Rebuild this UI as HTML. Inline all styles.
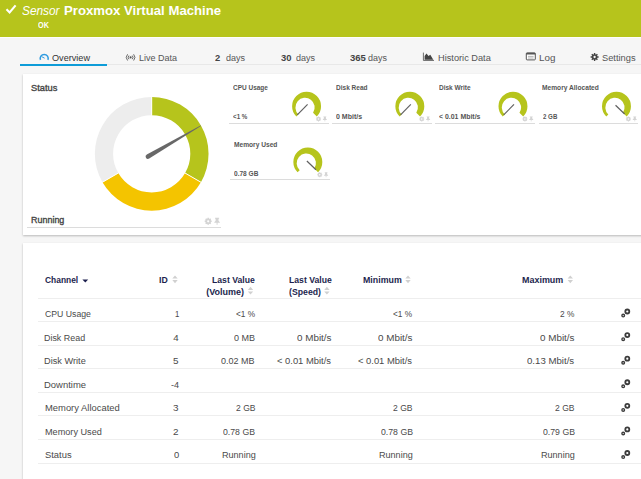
<!DOCTYPE html>
<html><head><meta charset="utf-8"><title>Sensor Proxmox Virtual Machine</title>
<style>
html,body{margin:0;padding:0}
body{width:641px;height:479px;overflow:hidden;background:#f6f6f6;font-family:"Liberation Sans",sans-serif;position:relative;color:#444}
.abs,.t,.ul,.hl,.card{position:absolute;white-space:nowrap}
.t{transform-origin:0 0}
.hdr{position:absolute;left:0;top:0;width:641px;height:37.4px;background:#b6c41c;border-bottom:1.8px solid #fdfdfd}
.card{background:#fff;box-shadow:0 0.6px 2px rgba(0,0,0,.25)}
.ul,.hl{height:1px;background:#dcdcdc}
.hl{background:#eeeeee}
svg.ov{position:absolute;left:0;top:0;pointer-events:none}
</style></head><body>
<div class="hdr"></div>
<div class="t" style="left:21.64px;top:3.00px;font-size:13px;line-height:15px;transform:scaleX(0.9122);font-style:italic;color:#fff">Sensor</div>
<div class="t" style="left:64.24px;top:3.00px;font-size:13px;line-height:15px;transform:scaleX(1.0130);font-weight:bold;color:#fff">Proxmox Virtual Machine</div>
<div class="t" style="left:38.18px;top:21.00px;font-size:8.2px;line-height:9px;transform:scaleX(0.8833);color:#fff;font-weight:bold">OK</div>
<div class="abs" style="left:20px;top:64px;width:621px;height:1px;background:#e8e8e8"></div>
<div class="abs" style="left:20px;top:63.8px;width:87px;height:1.8px;background:#0e9cd8"></div>
<div class="t" style="left:52.03px;top:52.00px;font-size:9.6px;line-height:11px;transform:scaleX(0.9494);color:#333">Overview</div>
<div class="t" style="left:138.55px;top:52.00px;font-size:9.6px;line-height:11px;transform:scaleX(0.9371);color:#555">Live Data</div>
<div class="t" style="left:215.04px;top:53.00px;font-size:9.0px;line-height:10px;transform:scaleX(1.0444);font-weight:bold;color:#444">2</div>
<div class="t" style="left:226.43px;top:52.00px;font-size:9.6px;line-height:11px;transform:scaleX(0.9385);color:#555">days</div>
<div class="t" style="left:281.49px;top:53.00px;font-size:9.0px;line-height:10px;transform:scaleX(1.0474);font-weight:bold;color:#444">30</div>
<div class="t" style="left:295.73px;top:52.00px;font-size:9.6px;line-height:11px;transform:scaleX(0.9385);color:#555">days</div>
<div class="t" style="left:349.54px;top:53.00px;font-size:9.0px;line-height:10px;transform:scaleX(1.0552);font-weight:bold;color:#444">365</div>
<div class="t" style="left:368.13px;top:52.00px;font-size:9.6px;line-height:11px;transform:scaleX(0.9333);color:#555">days</div>
<div class="t" style="left:437.53px;top:52.00px;font-size:9.6px;line-height:11px;transform:scaleX(0.9613);color:#555">Historic Data</div>
<div class="t" style="left:539.03px;top:52.00px;font-size:9.6px;line-height:11px;transform:scaleX(1.0237);color:#555">Log</div>
<div class="t" style="left:602.12px;top:52.00px;font-size:9.6px;line-height:11px;transform:scaleX(0.9676);color:#555">Settings</div>
<div class="card" style="left:22.8px;top:74px;width:640px;height:160.5px"></div>
<div class="card" style="left:22.8px;top:243.3px;width:640px;height:260px"></div>
<div class="t" style="left:31.00px;top:83.00px;font-size:9.3px;line-height:10px;transform:scaleX(1.0000);-webkit-text-stroke:0.35px #444;color:#444">Status</div>
<div class="t" style="left:31.02px;top:215.00px;font-size:9.3px;line-height:10px;transform:scaleX(0.9630);-webkit-text-stroke:0.35px #444;color:#444">Running</div>
<div class="ul" style="left:27px;top:227px;width:194px"></div>
<div class="t" style="left:232.77px;top:84.00px;font-size:6.9px;line-height:7px;transform:scaleX(0.9388);font-weight:bold;color:#555">CPU Usage</div>
<div class="t" style="left:232.77px;top:113.00px;font-size:6.9px;line-height:7px;transform:scaleX(0.9032);font-weight:bold;color:#555">&lt;1 %</div>
<div class="ul" style="left:229px;top:123.0px;width:99.5px"></div>
<div class="t" style="left:335.78px;top:84.00px;font-size:6.9px;line-height:7px;transform:scaleX(0.9462);font-weight:bold;color:#555">Disk Read</div>
<div class="t" style="left:336.00px;top:113.00px;font-size:6.9px;line-height:7px;transform:scaleX(1.0198);font-weight:bold;color:#555">0 Mbit/s</div>
<div class="ul" style="left:332.25px;top:123.0px;width:99.5px"></div>
<div class="t" style="left:438.93px;top:84.00px;font-size:6.9px;line-height:7px;transform:scaleX(0.9424);font-weight:bold;color:#555">Disk Write</div>
<div class="t" style="left:439.15px;top:113.00px;font-size:6.9px;line-height:7px;transform:scaleX(1.0061);font-weight:bold;color:#555">&lt; 0.01 Mbit/s</div>
<div class="ul" style="left:435.4px;top:123.0px;width:99.5px"></div>
<div class="t" style="left:542.42px;top:84.00px;font-size:6.9px;line-height:7px;transform:scaleX(0.9614);font-weight:bold;color:#555">Memory Allocated</div>
<div class="t" style="left:542.68px;top:113.00px;font-size:6.9px;line-height:7px;transform:scaleX(0.8903);font-weight:bold;color:#555">2 GB</div>
<div class="ul" style="left:538.9px;top:123.0px;width:99.5px"></div>
<div class="t" style="left:233.77px;top:141.00px;font-size:6.9px;line-height:7px;transform:scaleX(0.9605);font-weight:bold;color:#555">Memory Used</div>
<div class="t" style="left:234.01px;top:170.00px;font-size:6.9px;line-height:7px;transform:scaleX(0.9505);font-weight:bold;color:#555">0.78 GB</div>
<div class="ul" style="left:230.25px;top:178.8px;width:99.5px"></div>
<div class="t" style="left:45.27px;top:275.00px;font-size:9.0px;line-height:10px;transform:scaleX(0.9353);font-weight:bold;color:#1c1f4e">Channel</div>
<div class="t" style="left:159.12px;top:275.00px;font-size:9.0px;line-height:10px;transform:scaleX(0.9697);font-weight:bold;color:#1c1f4e">ID</div>
<div class="t" style="left:211.92px;top:275.00px;font-size:9.0px;line-height:10px;transform:scaleX(0.9600);font-weight:bold;color:#1c1f4e">Last Value</div>
<div class="t" style="left:206.25px;top:287.00px;font-size:9.0px;line-height:10px;transform:scaleX(1.0000);font-weight:bold;color:#1c1f4e">(Volume)</div>
<div class="t" style="left:288.52px;top:275.00px;font-size:9.0px;line-height:10px;transform:scaleX(0.9600);font-weight:bold;color:#1c1f4e">Last Value</div>
<div class="t" style="left:288.52px;top:287.00px;font-size:9.0px;line-height:10px;transform:scaleX(0.9688);font-weight:bold;color:#1c1f4e">(Speed)</div>
<div class="t" style="left:362.51px;top:275.00px;font-size:9.0px;line-height:10px;transform:scaleX(0.9805);font-weight:bold;color:#1c1f4e">Minimum</div>
<div class="t" style="left:522.25px;top:275.00px;font-size:9.0px;line-height:10px;transform:scaleX(0.9938);font-weight:bold;color:#1c1f4e">Maximum</div>
<div class="hl" style="left:38px;top:298px;width:603px"></div>
<div class="t" style="left:44.65px;top:308.00px;font-size:9.7px;line-height:11px;transform:scaleX(0.8975);color:#4a4a4a">CPU Usage</div>
<div class="t" style="left:174.60px;top:308.00px;font-size:9.7px;line-height:11px;transform:scaleX(0.8000);color:#4a4a4a">1</div>
<div class="t" style="left:235.87px;top:308.00px;font-size:9.7px;line-height:11px;transform:scaleX(0.8558);color:#4a4a4a">&lt;1 %</div>
<div class="t" style="left:393.37px;top:308.00px;font-size:9.7px;line-height:11px;transform:scaleX(0.8558);color:#4a4a4a">&lt;1 %</div>
<div class="t" style="left:559.82px;top:308.00px;font-size:9.7px;line-height:11px;transform:scaleX(0.8594);color:#4a4a4a">2 %</div>
<div class="hl" style="left:38px;top:321.0px;width:603px"></div>
<div class="t" style="left:44.41px;top:332.00px;font-size:9.7px;line-height:11px;transform:scaleX(0.9195);color:#4a4a4a">Disk Read</div>
<div class="t" style="left:173.35px;top:332.00px;font-size:9.7px;line-height:11px;transform:scaleX(1.0000);color:#4a4a4a">4</div>
<div class="t" style="left:233.97px;top:332.00px;font-size:9.7px;line-height:11px;transform:scaleX(0.9318);color:#4a4a4a">0 MB</div>
<div class="t" style="left:296.95px;top:332.00px;font-size:9.7px;line-height:11px;transform:scaleX(1.0165);color:#4a4a4a">0 Mbit/s</div>
<div class="t" style="left:378.15px;top:332.00px;font-size:9.7px;line-height:11px;transform:scaleX(1.0165);color:#4a4a4a">0 Mbit/s</div>
<div class="t" style="left:539.95px;top:332.00px;font-size:9.7px;line-height:11px;transform:scaleX(1.0165);color:#4a4a4a">0 Mbit/s</div>
<div class="hl" style="left:38px;top:344.6px;width:603px"></div>
<div class="t" style="left:44.39px;top:355.00px;font-size:9.7px;line-height:11px;transform:scaleX(0.9497);color:#4a4a4a">Disk Write</div>
<div class="t" style="left:173.49px;top:355.00px;font-size:9.7px;line-height:11px;transform:scaleX(1.0222);color:#4a4a4a">5</div>
<div class="t" style="left:221.47px;top:355.00px;font-size:9.7px;line-height:11px;transform:scaleX(0.9296);color:#4a4a4a">0.02 MB</div>
<div class="t" style="left:277.27px;top:355.00px;font-size:9.7px;line-height:11px;transform:scaleX(0.9682);color:#4a4a4a">&lt; 0.01 Mbit/s</div>
<div class="t" style="left:358.47px;top:355.00px;font-size:9.7px;line-height:11px;transform:scaleX(0.9682);color:#4a4a4a">&lt; 0.01 Mbit/s</div>
<div class="t" style="left:527.25px;top:355.00px;font-size:9.7px;line-height:11px;transform:scaleX(0.9947);color:#4a4a4a">0.13 Mbit/s</div>
<div class="hl" style="left:38px;top:368.2px;width:603px"></div>
<div class="t" style="left:44.37px;top:379.00px;font-size:9.7px;line-height:11px;transform:scaleX(0.9762);color:#4a4a4a">Downtime</div>
<div class="t" style="left:170.63px;top:379.00px;font-size:9.7px;line-height:11px;transform:scaleX(0.9375);color:#4a4a4a">-4</div>
<div class="hl" style="left:38px;top:391.8px;width:603px"></div>
<div class="t" style="left:44.77px;top:402.00px;font-size:9.7px;line-height:11px;transform:scaleX(0.9703);color:#4a4a4a">Memory Allocated</div>
<div class="t" style="left:173.49px;top:402.00px;font-size:9.7px;line-height:11px;transform:scaleX(1.0222);color:#4a4a4a">3</div>
<div class="t" style="left:235.51px;top:402.00px;font-size:9.7px;line-height:11px;transform:scaleX(0.8824);color:#4a4a4a">2 GB</div>
<div class="t" style="left:393.01px;top:402.00px;font-size:9.7px;line-height:11px;transform:scaleX(0.8824);color:#4a4a4a">2 GB</div>
<div class="t" style="left:554.81px;top:402.00px;font-size:9.7px;line-height:11px;transform:scaleX(0.8824);color:#4a4a4a">2 GB</div>
<div class="hl" style="left:38px;top:415.4px;width:603px"></div>
<div class="t" style="left:44.79px;top:426.00px;font-size:9.7px;line-height:11px;transform:scaleX(0.9424);color:#4a4a4a">Memory Used</div>
<div class="t" style="left:173.49px;top:426.00px;font-size:9.7px;line-height:11px;transform:scaleX(1.0222);color:#4a4a4a">2</div>
<div class="t" style="left:223.23px;top:426.00px;font-size:9.7px;line-height:11px;transform:scaleX(0.8993);color:#4a4a4a">0.78 GB</div>
<div class="t" style="left:380.73px;top:426.00px;font-size:9.7px;line-height:11px;transform:scaleX(0.8993);color:#4a4a4a">0.78 GB</div>
<div class="t" style="left:542.53px;top:426.00px;font-size:9.7px;line-height:11px;transform:scaleX(0.8993);color:#4a4a4a">0.79 GB</div>
<div class="hl" style="left:38px;top:439.0px;width:603px"></div>
<div class="t" style="left:44.62px;top:449.00px;font-size:9.7px;line-height:11px;transform:scaleX(0.9682);color:#4a4a4a">Status</div>
<div class="t" style="left:173.76px;top:449.00px;font-size:9.7px;line-height:11px;transform:scaleX(0.9684);color:#4a4a4a">0</div>
<div class="t" style="left:221.50px;top:449.00px;font-size:9.7px;line-height:11px;transform:scaleX(0.9353);color:#4a4a4a">Running</div>
<div class="t" style="left:379.00px;top:449.00px;font-size:9.7px;line-height:11px;transform:scaleX(0.9353);color:#4a4a4a">Running</div>
<div class="t" style="left:540.80px;top:449.00px;font-size:9.7px;line-height:11px;transform:scaleX(0.9353);color:#4a4a4a">Running</div>
<div class="hl" style="left:38px;top:462.6px;width:603px"></div>
<svg class="ov" width="641" height="479" viewBox="0 0 641 479">
<path d="M6.5 9.3L9.6 12.5L15.6 5.3" fill="none" stroke="#fff" stroke-width="2.1"/>
<g transform="translate(39 53)"><path d="M1.5 6.9A4 4 0 1 1 8.9 6.9" fill="none" stroke="#2f9be0" stroke-width="1.5"/><path d="M5.6 5.2L2.6 3.6" stroke="#2f9be0" stroke-width="1"/></g>
<g transform="translate(126 53.4) scale(0.92 1)"><circle cx="5" cy="4" r="1.15" fill="#555"/><path d="M3.2 2.2A2.6 2.6 0 0 0 3.2 5.8M6.8 2.2A2.6 2.6 0 0 1 6.8 5.8" fill="none" stroke="#5a5a5a" stroke-width="0.95"/><path d="M1.7 0.9A4.5 4.5 0 0 0 1.7 7.1M8.3 0.9A4.5 4.5 0 0 1 8.3 7.1" fill="none" stroke="#5a5a5a" stroke-width="0.95"/></g>
<g transform="translate(423 52.6) scale(1 0.911)"><path d="M0.4 0v8.6h10.6" fill="none" stroke="#555" stroke-width="0.9"/><path d="M1.6 7.9V3.6L3.5 1L5.5 3.8L7.3 2.3L10.3 7.9Z" fill="#444"/></g>
<g transform="translate(525.8 52.4)"><rect x="0.5" y="0.5" width="9" height="7" rx="0.8" fill="#fff" stroke="#555" stroke-width="1"/><rect x="0.5" y="0.5" width="9" height="1.6" fill="#555"/><path d="M2.2 4h5.6M2.2 5.6h5.6" stroke="#999" stroke-width="0.7"/></g>
<g transform="translate(594.6 57) scale(0.933)"><g stroke="#444" stroke-width="1.5"><path d="M0 -4.3V4.3M-4.3 0H4.3M-3 -3L3 3M-3 3L3 -3"/></g><circle r="3" fill="#444"/><circle r="1.25" fill="#f6f6f6"/></g>
<circle cx="208.20" cy="221.30" r="1.96" fill="none" stroke="#d4d4d4" stroke-width="1.75"/><path d="M210.12 221.30L211.70 221.30M209.56 222.66L210.67 223.77M208.20 223.23L208.20 224.80M206.84 222.66L205.73 223.77M206.27 221.30L204.70 221.30M206.84 219.94L205.73 218.83M208.20 219.38L208.20 217.80M209.56 219.94L210.67 218.83" stroke="#d4d4d4" stroke-width="1.47" fill="none"/><path d="M215.07 217.80h4.03v0.84h-0.56v2.10l1.34 1.40v0.56h-5.60v-0.56l1.34 -1.40v-2.10h-0.56Z" fill="#d4d4d4"/><path d="M217.09 222.00V224.80" stroke="#d4d4d4" stroke-width="0.91"/>
<path d="M151.70 96.95A56.85 56.85 0 0 1 200.93 182.22L185.13 173.10A38.6 38.6 0 0 0 151.70 115.20Z" fill="#b6c41c"/>
<path d="M200.93 182.22A56.85 56.85 0 0 1 102.47 182.23L118.27 173.10A38.6 38.6 0 0 0 185.13 173.10Z" fill="#f4c400"/>
<path d="M102.47 182.23A56.85 56.85 0 0 1 151.70 96.95L151.70 115.20A38.6 38.6 0 0 0 118.27 173.10Z" fill="#ededed"/>
<g stroke="#fff" stroke-width="1"><line x1="151.70" y1="115.70" x2="151.70" y2="96.45"/><line x1="184.70" y1="172.85" x2="201.37" y2="182.47"/><line x1="118.70" y1="172.85" x2="102.03" y2="182.48"/></g>
<g transform="translate(148.0 156.5) rotate(59.74)"><path d="M-2.4 0A2.4 2.4 0 0 0 2.4 0L0.35 -61.1L-0.35 -61.1Z" fill="#686868"/></g>
<path d="M296.34 116.49A14.48 14.48 0 1 1 316.82 116.49L313.06 112.73A9.64 9.64 0 1 0 298.44 114.39Z" fill="#b6c41c"/><line x1="307.58" y1="104.45" x2="297.28" y2="114.89" stroke="#606060" stroke-width="1.2"/>
<circle cx="318.50" cy="118.90" r="1.40" fill="none" stroke="#d4d4d4" stroke-width="1.25"/><path d="M319.88 118.90L321.00 118.90M319.47 119.87L320.27 120.67M318.50 120.28L318.50 121.40M317.53 119.87L316.73 120.67M317.12 118.90L316.00 118.90M317.53 117.93L316.73 117.13M318.50 117.53L318.50 116.40M319.47 117.93L320.27 117.13" stroke="#d4d4d4" stroke-width="1.05" fill="none"/><path d="M323.41 116.40h2.88v0.60h-0.40v1.50l0.96 1.00v0.40h-4.00v-0.40l0.96 -1.00v-1.50h-0.40Z" fill="#d4d4d4"/><path d="M324.85 119.40V121.40" stroke="#d4d4d4" stroke-width="0.65"/>
<path d="M399.59 116.49A14.48 14.48 0 1 1 420.07 116.49L416.31 112.73A9.64 9.64 0 1 0 401.69 114.39Z" fill="#b6c41c"/><line x1="410.83" y1="104.45" x2="400.53" y2="114.89" stroke="#606060" stroke-width="1.2"/>
<circle cx="421.75" cy="118.90" r="1.40" fill="none" stroke="#d4d4d4" stroke-width="1.25"/><path d="M423.12 118.90L424.25 118.90M422.72 119.87L423.52 120.67M421.75 120.28L421.75 121.40M420.78 119.87L419.98 120.67M420.38 118.90L419.25 118.90M420.78 117.93L419.98 117.13M421.75 117.53L421.75 116.40M422.72 117.93L423.52 117.13" stroke="#d4d4d4" stroke-width="1.05" fill="none"/><path d="M426.66 116.40h2.88v0.60h-0.40v1.50l0.96 1.00v0.40h-4.00v-0.40l0.96 -1.00v-1.50h-0.40Z" fill="#d4d4d4"/><path d="M428.10 119.40V121.40" stroke="#d4d4d4" stroke-width="0.65"/>
<path d="M502.74 116.49A14.48 14.48 0 1 1 523.22 116.49L519.46 112.73A9.64 9.64 0 1 0 504.84 114.39Z" fill="#b6c41c"/><line x1="513.98" y1="104.45" x2="503.68" y2="114.89" stroke="#606060" stroke-width="1.2"/>
<circle cx="524.90" cy="118.90" r="1.40" fill="none" stroke="#d4d4d4" stroke-width="1.25"/><path d="M526.27 118.90L527.40 118.90M525.87 119.87L526.67 120.67M524.90 120.28L524.90 121.40M523.93 119.87L523.13 120.67M523.52 118.90L522.40 118.90M523.93 117.93L523.13 117.13M524.90 117.53L524.90 116.40M525.87 117.93L526.67 117.13" stroke="#d4d4d4" stroke-width="1.05" fill="none"/><path d="M529.81 116.40h2.88v0.60h-0.40v1.50l0.96 1.00v0.40h-4.00v-0.40l0.96 -1.00v-1.50h-0.40Z" fill="#d4d4d4"/><path d="M531.25 119.40V121.40" stroke="#d4d4d4" stroke-width="0.65"/>
<path d="M606.24 116.49A14.48 14.48 0 1 1 626.72 116.49L622.96 112.73A9.64 9.64 0 1 0 608.34 114.39Z" fill="#b6c41c"/><line x1="615.54" y1="105.25" x2="624.63" y2="113.95" stroke="#606060" stroke-width="1.2"/>
<circle cx="628.40" cy="118.90" r="1.40" fill="none" stroke="#d4d4d4" stroke-width="1.25"/><path d="M629.77 118.90L630.90 118.90M629.37 119.87L630.17 120.67M628.40 120.28L628.40 121.40M627.43 119.87L626.63 120.67M627.02 118.90L625.90 118.90M627.43 117.93L626.63 117.13M628.40 117.53L628.40 116.40M629.37 117.93L630.17 117.13" stroke="#d4d4d4" stroke-width="1.05" fill="none"/><path d="M633.31 116.40h2.88v0.60h-0.40v1.50l0.96 1.00v0.40h-4.00v-0.40l0.96 -1.00v-1.50h-0.40Z" fill="#d4d4d4"/><path d="M634.75 119.40V121.40" stroke="#d4d4d4" stroke-width="0.65"/>
<path d="M297.59 172.29A14.48 14.48 0 1 1 318.07 172.29L314.31 168.53A9.64 9.64 0 1 0 299.69 170.19Z" fill="#b6c41c"/><line x1="306.89" y1="161.05" x2="315.98" y2="169.75" stroke="#606060" stroke-width="1.2"/>
<circle cx="319.75" cy="174.70" r="1.40" fill="none" stroke="#d4d4d4" stroke-width="1.25"/><path d="M321.12 174.70L322.25 174.70M320.72 175.67L321.52 176.47M319.75 176.08L319.75 177.20M318.78 175.67L317.98 176.47M318.38 174.70L317.25 174.70M318.78 173.73L317.98 172.93M319.75 173.33L319.75 172.20M320.72 173.73L321.52 172.93" stroke="#d4d4d4" stroke-width="1.05" fill="none"/><path d="M324.66 172.20h2.88v0.60h-0.40v1.50l0.96 1.00v0.40h-4.00v-0.40l0.96 -1.00v-1.50h-0.40Z" fill="#d4d4d4"/><path d="M326.10 175.20V177.20" stroke="#d4d4d4" stroke-width="0.65"/>
<path d="M82.4 279.4h5.8l-2.9 3Z" fill="#1c1f4e"/>
<path d="M172.3 278.5l2.7 -3.1l2.7 3.1ZM172.3 280.1l2.7 3.1l2.7 -3.1Z" fill="#d0d0d0"/>
<path d="M247.8 289.9l2.7 -3.1l2.7 3.1ZM247.8 291.5l2.7 3.1l2.7 -3.1Z" fill="#d0d0d0"/>
<path d="M324.2 289.9l2.7 -3.1l2.7 3.1ZM324.2 291.5l2.7 3.1l2.7 -3.1Z" fill="#d0d0d0"/>
<path d="M405.3 278.5l2.7 -3.1l2.7 3.1ZM405.3 280.1l2.7 3.1l2.7 -3.1Z" fill="#d0d0d0"/>
<path d="M567.5999999999999 278.5l2.7 -3.1l2.7 3.1ZM567.5999999999999 280.1l2.7 3.1l2.7 -3.1Z" fill="#d0d0d0"/>
<circle cx="627.30" cy="311.50" r="2.0" fill="none" stroke="#3c3c3c" stroke-width="1.8"/><circle cx="623.20" cy="315.60" r="1.3" fill="none" stroke="#3c3c3c" stroke-width="1.4"/>
<circle cx="627.30" cy="335.08" r="2.0" fill="none" stroke="#3c3c3c" stroke-width="1.8"/><circle cx="623.20" cy="339.18" r="1.3" fill="none" stroke="#3c3c3c" stroke-width="1.4"/>
<circle cx="627.30" cy="358.66" r="2.0" fill="none" stroke="#3c3c3c" stroke-width="1.8"/><circle cx="623.20" cy="362.76" r="1.3" fill="none" stroke="#3c3c3c" stroke-width="1.4"/>
<circle cx="627.30" cy="382.24" r="2.0" fill="none" stroke="#3c3c3c" stroke-width="1.8"/><circle cx="623.20" cy="386.34" r="1.3" fill="none" stroke="#3c3c3c" stroke-width="1.4"/>
<circle cx="627.30" cy="405.82" r="2.0" fill="none" stroke="#3c3c3c" stroke-width="1.8"/><circle cx="623.20" cy="409.92" r="1.3" fill="none" stroke="#3c3c3c" stroke-width="1.4"/>
<circle cx="627.30" cy="429.40" r="2.0" fill="none" stroke="#3c3c3c" stroke-width="1.8"/><circle cx="623.20" cy="433.50" r="1.3" fill="none" stroke="#3c3c3c" stroke-width="1.4"/>
<circle cx="627.30" cy="452.98" r="2.0" fill="none" stroke="#3c3c3c" stroke-width="1.8"/><circle cx="623.20" cy="457.08" r="1.3" fill="none" stroke="#3c3c3c" stroke-width="1.4"/>
</svg>
</body></html>
